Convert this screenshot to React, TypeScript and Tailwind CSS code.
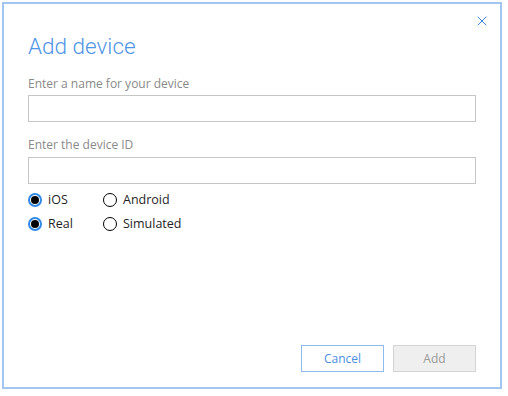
import { X } from 'lucide-react';

function Radio({ checked, label }: { checked: boolean; label: string }) {
  return (
    <label className="flex items-center gap-[6px]">
      {checked ? (
        <span className="flex h-[14px] w-[14px] items-center justify-center rounded-full border-2 border-[#2e8ae6] bg-white">
          <span className="h-[8px] w-[8px] rounded-full bg-black" />
        </span>
      ) : (
        <span className="h-[14px] w-[14px] rounded-full border-[1.5px] border-black bg-white" />
      )}
      <span className="text-[12.5px] text-[#1f1f1f]">{label}</span>
    </label>
  );
}

export default function App() {
  return (
    <div className="h-[396px] w-[508px] bg-white pl-[2px] pt-[2px] font-['Open_Sans',sans-serif]">
      <div className="flex h-[387px] w-[500px] flex-col border-2 border-[#a3c6f0] bg-white">
        <div className="flex justify-end pr-[10px] pt-[9px]">
          <button className="flex h-[16px] w-[16px] items-center justify-center text-[#3a86e0]">
            <X size={16} strokeWidth={1.5} />
          </button>
        </div>

        <div className="flex flex-1 flex-col px-[24px]">
          <h1 className="mt-[3px] font-['Roboto',sans-serif] text-[22.5px] font-light leading-[28px] text-[#4f95e6]">Add device</h1>

          <label className="mt-[16px] text-[12px] leading-[16px] text-[#8a8a8a]">Enter a name for your device</label>
          <input className="mt-[3px] h-[27px] w-full border border-[#c6c6c6] px-2 text-[12px] outline-none" />

          <label className="mt-[15px] text-[12px] leading-[16px] text-[#8a8a8a]">Enter the device ID</label>
          <input className="mt-[4px] h-[27px] w-full border border-[#c6c6c6] px-2 text-[12px] outline-none" />

          <div className="mt-[4px] grid grid-cols-[75px_1fr] grid-rows-[24px_24px] items-center">
            <Radio checked label="iOS" />
            <Radio checked={false} label="Android" />
            <Radio checked label="Real" />
            <Radio checked={false} label="Simulated" />
          </div>

          <div className="mt-auto mb-[15px] flex justify-end gap-[9px]">
            <button className="h-[27px] w-[83px] border border-[#8dbbf0] bg-white text-[12px] text-[#4a8ee0]">Cancel</button>
            <button className="h-[27px] w-[83px] border border-[#d4d4d4] bg-[#efefef] text-[12px] text-[#9a9a9a]">Add</button>
          </div>
        </div>
      </div>
    </div>
  );
}
